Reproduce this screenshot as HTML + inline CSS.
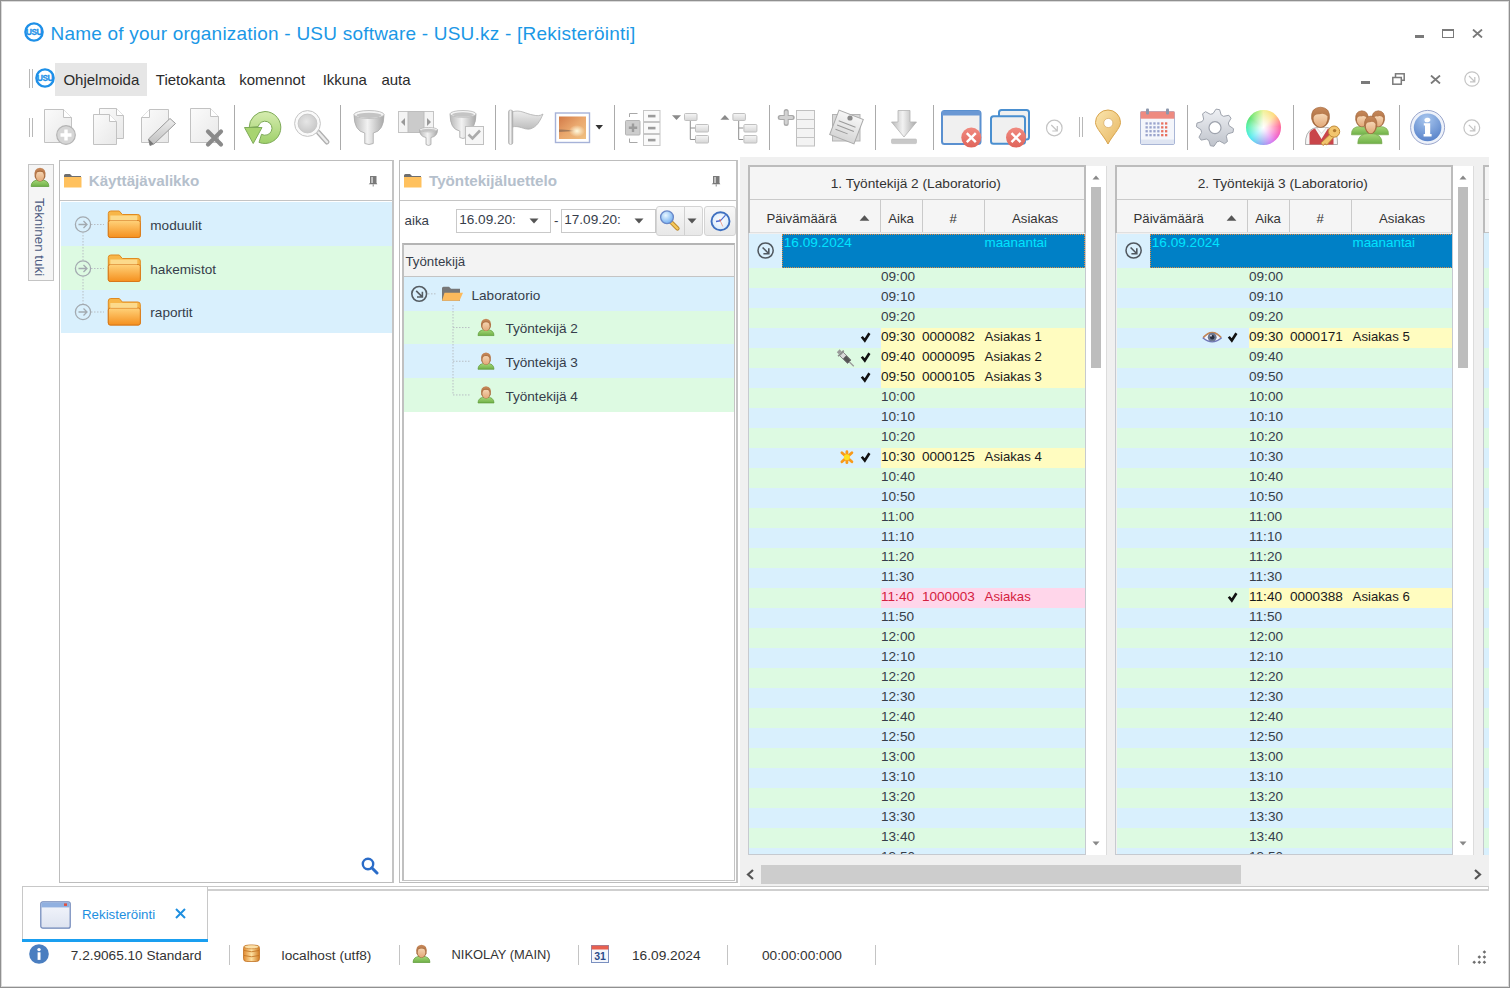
<!DOCTYPE html><html><head><meta charset="utf-8"><style>
*{margin:0;padding:0;box-sizing:border-box}
html,body{width:1510px;height:988px;overflow:hidden;background:#fff}
body{position:relative;font-family:"Liberation Sans",sans-serif}
.t{position:absolute;white-space:pre}
.r{position:absolute}
</style></head><body>
<div class="r" style="left:0px;top:0px;width:1510px;height:988px;border:1px solid #909090;box-shadow:inset 0 0 0 1px #dadada;z-index:5"></div><svg class="r" style="left:24px;top:22px" width="20" height="20" viewBox="0 0 20 20"><circle cx="10" cy="10" r="8.6" fill="none" stroke="#1e90e8" stroke-width="2.4"/><text x="10" y="12.9" font-family="Liberation Sans" font-weight="700" font-size="8.2" text-anchor="middle" fill="#1e90e8" stroke="#1e90e8" stroke-width="0.3" letter-spacing="-0.4">USU</text></svg><div class="t" style="left:50.5px;top:23.82px;font-size:19px;line-height:19px;color:#1b98e6;font-weight:400;letter-spacing:0.22px">Name of your organization - USU software - USU.kz - [Rekisteröinti]</div><div class="r" style="left:1415px;top:35px;width:9px;height:2.5px;background:#7a7a7a"></div><div class="r" style="left:1442px;top:29px;width:12px;height:9px;border:1.5px solid #7a7a7a;border-top-width:2.5px"></div><svg class="r" style="left:1472px;top:29px" width="11" height="9" viewBox="0 0 11 9"><path d="M1 0.5L10 8.5M10 0.5L1 8.5" stroke="#7a7a7a" stroke-width="1.8"/></svg><div class="r" style="left:29px;top:69px;width:1px;height:19px;background:#b8b8b8"></div><div class="r" style="left:32px;top:69px;width:1px;height:19px;background:#b8b8b8"></div><svg class="r" style="left:35px;top:68px" width="20" height="20" viewBox="0 0 20 20"><circle cx="10" cy="10" r="8.6" fill="none" stroke="#1e90e8" stroke-width="2.4"/><text x="10" y="12.9" font-family="Liberation Sans" font-weight="700" font-size="8.2" text-anchor="middle" fill="#1e90e8" stroke="#1e90e8" stroke-width="0.3" letter-spacing="-0.4">USU</text></svg><div class="r" style="left:55px;top:63px;width:92px;height:33px;background:#e6e6e6"></div><div class="t" style="left:63.4px;top:72.10px;font-size:15px;line-height:15px;color:#2b2b2b;font-weight:400;">Ohjelmoida</div><div class="t" style="left:155.8px;top:72.10px;font-size:15px;line-height:15px;color:#2b2b2b;font-weight:400;">Tietokanta</div><div class="t" style="left:239.2px;top:72.10px;font-size:15px;line-height:15px;color:#2b2b2b;font-weight:400;">komennot</div><div class="t" style="left:322.7px;top:72.10px;font-size:15px;line-height:15px;color:#2b2b2b;font-weight:400;">Ikkuna</div><div class="t" style="left:381.4px;top:72.10px;font-size:15px;line-height:15px;color:#2b2b2b;font-weight:400;">auta</div><div class="r" style="left:1361px;top:81px;width:9px;height:2.5px;background:#7a7a7a"></div><svg class="r" style="left:1392px;top:73px" width="13" height="12" viewBox="0 0 13 12"><rect x="3.5" y="0.8" width="8.7" height="6.5" fill="none" stroke="#7a7a7a" stroke-width="1.5"/><rect x="0.8" y="4.5" width="8.5" height="6.7" fill="#fff" stroke="#7a7a7a" stroke-width="1.5"/></svg><svg class="r" style="left:1430px;top:75px" width="11" height="9" viewBox="0 0 11 9"><path d="M1 0.5L10 8.5M10 0.5L1 8.5" stroke="#7a7a7a" stroke-width="1.8"/></svg><svg class="r" style="left:1464px;top:71px" width="16" height="16" viewBox="0 0 16 16"><circle cx="8" cy="8" r="7.2" fill="none" stroke="#c4c4c4" stroke-width="1.2"/><path d="M5 5L10.5 10.5M6 10.8H10.8V6" fill="none" stroke="#c4c4c4" stroke-width="1.2"/></svg><svg class="r" style="left:0;top:0" width="1510" height="160" viewBox="0 0 1510 160"><defs>
<linearGradient id="gPage" x1="0" y1="0" x2="1" y2="1"><stop offset="0" stop-color="#fbfbfb"/><stop offset="1" stop-color="#e8e8e8"/></linearGradient>
<linearGradient id="gGreen" x1="0" y1="0" x2="0" y2="1"><stop offset="0" stop-color="#d6ecb0"/><stop offset="1" stop-color="#9fd06a"/></linearGradient>
<radialGradient id="gLens" cx="0.45" cy="0.4" r="0.65"><stop offset="0" stop-color="#e6e6e6"/><stop offset="1" stop-color="#c6c6c6"/></radialGradient>
<linearGradient id="gMetal" x1="0" y1="0" x2="1" y2="0"><stop offset="0" stop-color="#b8b8b8"/><stop offset="0.45" stop-color="#f2f2f2"/><stop offset="1" stop-color="#a8a8a8"/></linearGradient>
<linearGradient id="gMetalV" x1="0" y1="0" x2="0" y2="1"><stop offset="0" stop-color="#eeeeee"/><stop offset="1" stop-color="#bdbdbd"/></linearGradient>
<linearGradient id="gSun" x1="0" y1="0" x2="1" y2="1"><stop offset="0" stop-color="#d27a48"/><stop offset="0.5" stop-color="#eaa86e"/><stop offset="1" stop-color="#f0c080"/></linearGradient>
<radialGradient id="gSunSpot" cx="0.5" cy="0.5" r="0.5"><stop offset="0" stop-color="#fffbe0"/><stop offset="1" stop-color="#fffbe0" stop-opacity="0"/></radialGradient>
<linearGradient id="gBox" x1="0" y1="0" x2="0" y2="1"><stop offset="0" stop-color="#f6f6f6"/><stop offset="1" stop-color="#d6d6d6"/></linearGradient>
<linearGradient id="gPin" x1="0" y1="0" x2="1" y2="1"><stop offset="0" stop-color="#fbe6b0"/><stop offset="1" stop-color="#e7b660"/></linearGradient>
<linearGradient id="gGear" x1="0" y1="0" x2="0" y2="1"><stop offset="0" stop-color="#eef0f4"/><stop offset="1" stop-color="#bfc3cb"/></linearGradient>
<radialGradient id="gInfo" cx="0.45" cy="0.2" r="0.85"><stop offset="0" stop-color="#a8c6ee"/><stop offset="1" stop-color="#5580c8"/></radialGradient>
<linearGradient id="gRed" x1="0" y1="0" x2="0" y2="1"><stop offset="0" stop-color="#f08a80"/><stop offset="1" stop-color="#e0645a"/></linearGradient>
<linearGradient id="gFolder" x1="0" y1="0" x2="0" y2="1"><stop offset="0" stop-color="#fde08a"/><stop offset="1" stop-color="#f59a2a"/></linearGradient>
<linearGradient id="gSkin" x1="0" y1="0" x2="0" y2="1"><stop offset="0" stop-color="#f6d6b4"/><stop offset="1" stop-color="#e2a878"/></linearGradient>
<linearGradient id="gHair" x1="0" y1="0" x2="0" y2="1"><stop offset="0" stop-color="#c8895a"/><stop offset="1" stop-color="#9a6036"/></linearGradient>
<linearGradient id="gBody" x1="0" y1="0" x2="0" y2="1"><stop offset="0" stop-color="#a8d878"/><stop offset="1" stop-color="#6fb048"/></linearGradient>
</defs><rect x="29" y="118" width="1" height="19" fill="#b8b8b8"/><rect x="32" y="118" width="1" height="19" fill="#b8b8b8"/><rect x="1079" y="117" width="1" height="20" fill="#b8b8b8"/><rect x="1082" y="117" width="1" height="20" fill="#b8b8b8"/><rect x="234" y="105" width="1" height="45" fill="#ababab"/><rect x="340" y="105" width="1" height="45" fill="#ababab"/><rect x="495" y="105" width="1" height="45" fill="#ababab"/><rect x="614" y="105" width="1" height="45" fill="#ababab"/><rect x="769" y="105" width="1" height="45" fill="#ababab"/><rect x="875" y="105" width="1" height="45" fill="#ababab"/><rect x="933" y="105" width="1" height="45" fill="#ababab"/><rect x="1187" y="105" width="1" height="45" fill="#ababab"/><rect x="1293" y="105" width="1" height="45" fill="#ababab"/><rect x="1399" y="105" width="1" height="45" fill="#ababab"/><path d="M44.5 109.5H63.5L71.5 117.5V142.5H44.5Z" fill="url(#gPage)" stroke="#c2c2c2" stroke-width="1"/><path d="M63.5 109.5V117.5H71.5" fill="#fff" stroke="#c2c2c2" stroke-width="1"/><circle cx="66" cy="135" r="9.3" fill="#d6d6d6" stroke="#b4b4b4" stroke-width="1.2"/><path d="M66 129.5V140.5M60.5 135H71.5" stroke="#fff" stroke-width="3.4"/><path d="M99.5 108.5H116.5L123.5 115.5V138.5H99.5Z" fill="url(#gPage)" stroke="#c2c2c2" stroke-width="1"/><path d="M116.5 108.5V115.5H123.5" fill="#fff" stroke="#c2c2c2" stroke-width="1"/><path d="M93.5 114.5H109.5L116.5 121.5V144.5H93.5Z" fill="url(#gPage)" stroke="#c2c2c2" stroke-width="1"/><path d="M109.5 114.5V121.5H116.5" fill="#fff" stroke="#c2c2c2" stroke-width="1"/><path d="M149.5 109.5H168.5V142.5H141.5V117.5Z" fill="url(#gPage)" stroke="#c2c2c2" stroke-width="1"/><path d="M149.5 109.5V117.5H141.5" fill="#fff" stroke="#c2c2c2" stroke-width="1"/><path d="M150 145.5L148.5 139L170 118.5L175.5 123.5L154 144Z" fill="url(#gMetalV)" stroke="#9a9a9a" stroke-width="1"/><path d="M150 145.5L148.5 139L153.5 143.8Z" fill="#777"/><path d="M190.5 108.5H210.5L218.5 116.5V142.5H190.5Z" fill="url(#gPage)" stroke="#c2c2c2" stroke-width="1"/><path d="M210.5 108.5V116.5H218.5" fill="#fff" stroke="#c2c2c2" stroke-width="1"/><path d="M208 131.5L221 144.5M221 131.5L208 144.5" stroke="#8a8a8a" stroke-width="4.2" stroke-linecap="round"/><path d="M265 111.5A16 16 0 1 1 259 142.4L261.5 134.3A7 7 0 1 0 258.2 126.5L249.2 127.5A16 16 0 0 1 265 111.5Z" fill="url(#gGreen)" stroke="#7eaa58" stroke-width="1"/><path d="M244.5 127.5H262L253.2 143.5Z" fill="#a8d470" stroke="#7eaa58" stroke-width="1" stroke-linejoin="round"/><path d="M318.5 132.5L327 142" stroke="#b0b0b0" stroke-width="5" stroke-linecap="round"/><path d="M318.5 132.5L327 142" stroke="#ececec" stroke-width="2.4" stroke-linecap="round"/><circle cx="307.5" cy="123.5" r="12.9" fill="#fafafa" stroke="#c4c4c4" stroke-width="1"/><circle cx="307.5" cy="123.5" r="9.4" fill="url(#gLens)" stroke="#c9c9c9" stroke-width="1"/><path d="M354.0 114.5Q354.0 131.0 364.75 133V143.5Q369 145.5 373.25 143.5V133Q384.0 131.0 384.0 114.5Z" fill="url(#gMetal)" stroke="#a9a9a9" stroke-width="0.8"/><ellipse cx="369" cy="114.5" rx="15.0" ry="4.0" fill="#f4f4f4" stroke="#b8b8b8" stroke-width="0.8"/><ellipse cx="369" cy="115.3" rx="12.5" ry="2.6" fill="#c4c4c4"/><rect x="398.5" y="111.5" width="35" height="21" fill="#f4f4f4" stroke="#c4c4c4"/><rect x="408" y="111.5" width="16" height="21" fill="#cbcbcb" stroke="#bdbdbd"/><path d="M405 118V126L401 122Z" fill="#9a9a9a"/><path d="M427 118V126L431 122Z" fill="#9a9a9a"/><path d="M419.5 129.7Q419.5 136.4 426.0 137.5V144.5Q428.5 146.5 431.0 144.5V137.5Q437.5 136.4 437.5 129.7Z" fill="url(#gMetal)" stroke="#a9a9a9" stroke-width="0.8"/><ellipse cx="428.5" cy="129.7" rx="9.0" ry="2.2" fill="#f4f4f4" stroke="#b8b8b8" stroke-width="0.8"/><ellipse cx="428.5" cy="130.14" rx="7.625" ry="1.4300000000000002" fill="#c4c4c4"/><path d="M450.0 113.9Q450.0 129.3 459.75 131V137.5Q463 139.5 466.25 137.5V131Q476.0 129.3 476.0 113.9Z" fill="url(#gMetal)" stroke="#a9a9a9" stroke-width="0.8"/><ellipse cx="463" cy="113.9" rx="13.0" ry="3.4" fill="#f4f4f4" stroke="#b8b8b8" stroke-width="0.8"/><ellipse cx="463" cy="114.58" rx="10.875" ry="2.21" fill="#c4c4c4"/><rect x="465.5" y="126.5" width="18" height="18" fill="#f6f6f6" stroke="#c0c0c0"/><path d="M468.5 134.5L472.5 138.5L480 130.5" fill="none" stroke="#ababab" stroke-width="2.6"/><path d="M512 112C520 109 526 114 533 115C537 116 540 116 543 114C540 121 537 127 530 129C524 130 519 125 512 127Z" fill="url(#gMetalV)" stroke="#b0b0b0" stroke-width="0.8"/><rect x="508.5" y="110" width="4.3" height="34.5" rx="2" fill="url(#gMetal)" stroke="#a8a8a8" stroke-width="0.6"/><rect x="555.5" y="113" width="34" height="29.5" fill="#fff" stroke="#a6b2d8" stroke-width="1.4"/><rect x="559" y="116.5" width="27" height="22.5" fill="url(#gSun)"/><path d="M559 129.5Q566 129 575 131L559 132Z" fill="#7a6050" opacity="0.6"/><ellipse cx="577" cy="131" rx="8" ry="6" fill="url(#gSunSpot)"/><path d="M595.5 125H603L599.2 129.5Z" fill="#333"/><path d="M637.5 113.5H629.5V117M629.5 138.5V142.5H637.5" fill="none" stroke="#a8a8a8" stroke-width="1"/><rect x="625.5" y="120.5" width="14.5" height="14.5" rx="1" fill="#cdcdcd" stroke="#b4b4b4"/><path d="M633 123.5V132M628.8 127.8H637.2" stroke="#9c9c9c" stroke-width="2.4"/><rect x="643.5" y="110.5" width="16.5" height="11" fill="#fafafa" stroke="#c6c6c6"/><rect x="648" y="114.8" width="7.5" height="2.6" fill="#9c9c9c"/><rect x="643.5" y="122.5" width="16.5" height="11" fill="#fafafa" stroke="#c6c6c6"/><rect x="648" y="126.8" width="7.5" height="2.6" fill="#9c9c9c"/><rect x="643.5" y="134.5" width="16.5" height="11" fill="#fafafa" stroke="#c6c6c6"/><rect x="648" y="138.8" width="7.5" height="2.6" fill="#9c9c9c"/><path d="M672 115.3H681L676.5 120Z" fill="#8a8a8a"/><path d="M690.3 120V139.5H695M690.3 128H695" fill="none" stroke="#8e8e8e" stroke-width="1"/><rect x="684.5" y="113.5" width="12.5" height="7" rx="1" fill="url(#gBox)" stroke="#c0c0c0"/><rect x="695.5" y="124.5" width="13" height="7.5" rx="1" fill="url(#gBox)" stroke="#c0c0c0"/><rect x="695.5" y="135.5" width="13" height="7.5" rx="1" fill="url(#gBox)" stroke="#c0c0c0"/><path d="M720.4 119.7L724.9 115L729.4 119.7Z" fill="#8a8a8a"/><path d="M738.6999999999999 120V139.5H743.4M738.6999999999999 128H743.4" fill="none" stroke="#8e8e8e" stroke-width="1"/><rect x="732.9" y="113.5" width="12.5" height="7" rx="1" fill="url(#gBox)" stroke="#c0c0c0"/><rect x="743.9" y="124.5" width="13" height="7.5" rx="1" fill="url(#gBox)" stroke="#c0c0c0"/><rect x="743.9" y="135.5" width="13" height="7.5" rx="1" fill="url(#gBox)" stroke="#c0c0c0"/><path d="M786.2 111.5V123.5M780.2 117.5H792.2" stroke="#a9a9a9" stroke-width="5" stroke-linecap="round"/><path d="M786.2 112V123M780.7 117.5H791.7" stroke="#d2d2d2" stroke-width="3" stroke-linecap="round"/><rect x="796.5" y="110.5" width="18" height="35.5" fill="#f3f3f3" stroke="#c0c0c0"/><path d="M796.5 119.5H814.5M796.5 128.5H814.5M796.5 137.5H814.5" stroke="#c4c4c4"/><rect x="832.5" y="114.5" width="27.5" height="26.5" fill="#d8d8d8" stroke="#b4b4b4"/><g transform="rotate(21 846.5 127)"><rect x="833.5" y="114" width="26" height="26" fill="url(#gBox)" stroke="#aaa"/><path d="M837 124H855M837 128.5H855M837 133H850" stroke="#9a9a9a" stroke-width="1"/></g><circle cx="850" cy="118" r="2.6" fill="#8a8a8a"/><path d="M898 110.5H910V122H916.5L904 137L891.5 122H898Z" fill="url(#gMetal)" stroke="#b4b4b4" stroke-width="0.8"/><rect x="891.5" y="139" width="25" height="4.6" rx="1" fill="#c8c8c8" stroke="#b8b8b8" stroke-width="0.6"/><rect x="942" y="111" width="38.5" height="33" rx="2.5" fill="#f0f0f0" stroke="#5a90d0" stroke-width="2"/><rect x="942" y="111" width="38.5" height="4.5" fill="#6a98d4"/><circle cx="971.3" cy="137.6" r="10" fill="url(#gRed)"/><path d="M966.8 133.1L975.8 142.1M975.8 133.1L966.8 142.1" stroke="#fff" stroke-width="2.4"/><rect x="999" y="110" width="30" height="29.5" rx="2.5" fill="#f0f0f0" stroke="#4a8fd0" stroke-width="2"/><rect x="991" y="116.3" width="34" height="27.5" rx="2.5" fill="#f0f0f0" stroke="#4a8fd0" stroke-width="2"/><circle cx="1016" cy="137.6" r="10" fill="url(#gRed)"/><path d="M1011.5 133.1L1020.5 142.1M1020.5 133.1L1011.5 142.1" stroke="#fff" stroke-width="2.4"/><circle cx="1054.3" cy="128" r="7.8" fill="none" stroke="#c4c4c4" stroke-width="1.2"/><path d="M1051.3 125L1056.8 130.5M1052.3 131H1057.3V126" fill="none" stroke="#c4c4c4" stroke-width="1.2"/><circle cx="1471.8" cy="127.8" r="7.9" fill="none" stroke="#c4c4c4" stroke-width="1.2"/><path d="M1468.8 124.8L1474.3 130.3M1469.8 130.8H1474.8V125.8" fill="none" stroke="#c4c4c4" stroke-width="1.2"/><path d="M1108 144C1104 136 1095.5 128 1095.5 122.5A12.5 12.5 0 0 1 1120.5 122.5C1120.5 128 1112 136 1108 144Z" fill="url(#gPin)" stroke="#d8a44c" stroke-width="1"/><circle cx="1108.3" cy="123" r="4.6" fill="#fff" stroke="#d8b070" stroke-width="0.8"/><rect x="1140.5" y="111.5" width="34" height="33" rx="1.5" fill="#f4f6fb" stroke="#a9b6d6"/><rect x="1140.5" y="111.5" width="34" height="7.2" fill="#ee8a80"/><rect x="1141" y="139.5" width="33" height="4.5" fill="#dfe5f2"/><rect x="1146" y="108.5" width="3" height="6" rx="1" fill="#8c97ac"/><rect x="1166" y="108.5" width="3" height="6" rx="1" fill="#8c97ac"/><rect x="1145.5" y="122.3" width="2.3" height="2.3" fill="#9aa4cc"/><rect x="1149.4" y="122.3" width="2.3" height="2.3" fill="#9aa4cc"/><rect x="1153.3" y="122.3" width="2.3" height="2.3" fill="#9aa4cc"/><rect x="1157.2" y="122.3" width="2.3" height="2.3" fill="#9aa4cc"/><rect x="1161.1" y="122.3" width="2.3" height="2.3" fill="#e8705e"/><rect x="1165.0" y="122.3" width="2.3" height="2.3" fill="#e8705e"/><rect x="1145.5" y="126.2" width="2.3" height="2.3" fill="#9aa4cc"/><rect x="1149.4" y="126.2" width="2.3" height="2.3" fill="#9aa4cc"/><rect x="1153.3" y="126.2" width="2.3" height="2.3" fill="#9aa4cc"/><rect x="1157.2" y="126.2" width="2.3" height="2.3" fill="#9aa4cc"/><rect x="1161.1" y="126.2" width="2.3" height="2.3" fill="#e8705e"/><rect x="1165.0" y="126.2" width="2.3" height="2.3" fill="#e8705e"/><rect x="1145.5" y="130.1" width="2.3" height="2.3" fill="#9aa4cc"/><rect x="1149.4" y="130.1" width="2.3" height="2.3" fill="#9aa4cc"/><rect x="1153.3" y="130.1" width="2.3" height="2.3" fill="#9aa4cc"/><rect x="1157.2" y="130.1" width="2.3" height="2.3" fill="#9aa4cc"/><rect x="1161.1" y="130.1" width="2.3" height="2.3" fill="#e8705e"/><rect x="1165.0" y="130.1" width="2.3" height="2.3" fill="#e8705e"/><rect x="1145.5" y="134.0" width="2.3" height="2.3" fill="#9aa4cc"/><rect x="1149.4" y="134.0" width="2.3" height="2.3" fill="#9aa4cc"/><rect x="1153.3" y="134.0" width="2.3" height="2.3" fill="#9aa4cc"/><rect x="1157.2" y="134.0" width="2.3" height="2.3" fill="#9aa4cc"/><rect x="1161.1" y="134.0" width="2.3" height="2.3" fill="#e8705e"/><rect x="1165.0" y="134.0" width="2.3" height="2.3" fill="#e8705e"/><path d="M1213.00 113.64L1216.02 109.13L1219.63 109.68L1221.15 114.90L1223.53 116.34L1228.86 115.29L1231.01 118.23L1228.40 123.00L1229.06 125.70L1233.57 128.72L1233.02 132.33L1227.80 133.85L1226.36 136.23L1227.41 141.56L1224.47 143.71L1219.70 141.10L1217.00 141.76L1213.98 146.27L1210.37 145.72L1208.85 140.50L1206.47 139.06L1201.14 140.11L1198.99 137.17L1201.60 132.40L1200.94 129.70L1196.43 126.68L1196.98 123.07L1202.20 121.55L1203.64 119.17L1202.59 113.84L1205.53 111.69L1210.30 114.30Z" fill="url(#gGear)" stroke="#9ea3ad" stroke-width="1" stroke-linejoin="round"/><circle cx="1215" cy="127.7" r="6" fill="#fff" stroke="#9ea3ad" stroke-width="1.2"/><circle cx="1427.6" cy="127.4" r="17" fill="#eef2fa" stroke="#9aa6cc" stroke-width="1"/><circle cx="1427.6" cy="127.4" r="13.8" fill="url(#gInfo)"/><ellipse cx="1427.4" cy="120" rx="3" ry="2.2" fill="#fff" transform="rotate(-15 1427.4 120)"/><path d="M1423.8 123.2H1430.2V134H1431.6V136.4H1423.6V134H1425V125.6H1423.8Z" fill="#fff"/><path d="M1305.5 144.5Q1305 132 1313 128.5L1317 127.5H1327L1331 128.5Q1338 132 1337.5 144.5Z" fill="#f6f6f6" stroke="#9a9a9a" stroke-width="0.8"/><path d="M1309.5 144.5V133Q1311 129.5 1315 128.5L1321.5 139L1328 128.5Q1332 129.5 1333.5 133V144.5Z" fill="#c9454a"/><path d="M1316.5 127.5L1321.5 133.5L1326.5 127.5Z" fill="#fff" stroke="#bbb" stroke-width="0.5"/><path d="M1311.59 118.64Q1310.51 107.72 1320.5 107.19999999999999Q1330.49 107.72 1329.41 118.64Q1327.25 127.47999999999999 1320.5 127.47999999999999Q1313.75 127.47999999999999 1311.59 118.64Z" fill="url(#gHair)" stroke="#a0643a" stroke-width="0.6"/><path d="M1313.48 118.11999999999999Q1314.02 113.96 1319.15 114.27199999999999Q1324.55 112.39999999999999 1327.52 116.35199999999999Q1327.79 120.72 1325.9 123.83999999999999Q1323.875 126.96 1320.5 126.96Q1317.125 126.96 1315.1 123.83999999999999Q1313.21 120.72 1313.48 118.11999999999999Z" fill="url(#gSkin)"/><path d="M1330.5 134L1321 143L1323 145.5L1325 143.8L1327 145L1328.5 143L1333.5 137.5" fill="#f2c56e" stroke="#c08a38" stroke-width="0.9" stroke-linejoin="round"/><circle cx="1334.1" cy="131.6" r="5.6" fill="#f2c56e" stroke="#c08a38" stroke-width="1"/><circle cx="1334.6" cy="130.6" r="1.7" fill="#b07a30"/><path d="M1351.5 134.8Q1351.0 126.5 1360.25 126.5Q1369.5 126.5 1369 134.8Z" fill="url(#gBody)" stroke="#78a850" stroke-width="0.7"/><path d="M1371 134.8Q1370.5 126.5 1379.75 126.5Q1389.0 126.5 1388.5 134.8Z" fill="url(#gBody)" stroke="#78a850" stroke-width="0.7"/><path d="M1355.63 119.82Q1354.8700000000001 111.21000000000001 1361.9 110.8Q1368.93 111.21000000000001 1368.17 119.82Q1366.65 126.78999999999999 1361.9 126.78999999999999Q1357.15 126.78999999999999 1355.63 119.82Z" fill="url(#gHair)" stroke="#a0643a" stroke-width="0.6"/><path d="M1356.96 119.41Q1357.3400000000001 116.13 1360.95 116.376Q1364.75 114.9 1366.8400000000001 118.016Q1367.0300000000002 121.46 1365.7 123.92Q1364.275 126.38 1361.9 126.38Q1359.525 126.38 1358.1000000000001 123.92Q1356.77 121.46 1356.96 119.41Z" fill="url(#gSkin)"/><path d="M1372.03 119.82Q1371.27 111.21000000000001 1378.3 110.8Q1385.33 111.21000000000001 1384.57 119.82Q1383.05 126.78999999999999 1378.3 126.78999999999999Q1373.55 126.78999999999999 1372.03 119.82Z" fill="url(#gHair)" stroke="#a0643a" stroke-width="0.6"/><path d="M1373.36 119.41Q1373.74 116.13 1377.35 116.376Q1381.1499999999999 114.9 1383.24 118.016Q1383.43 121.46 1382.1 123.92Q1380.675 126.38 1378.3 126.38Q1375.925 126.38 1374.5 123.92Q1373.1699999999998 121.46 1373.36 119.41Z" fill="url(#gSkin)"/><path d="M1357.8 143.7Q1357.3 133.5 1369.9 133.5Q1382.5 133.5 1382 143.7Z" fill="url(#gBody)" stroke="#78a850" stroke-width="0.7"/><path d="M1364.5620000000001 126.0Q1363.818 116.55 1370.7 116.1Q1377.582 116.55 1376.838 126.0Q1375.3500000000001 133.65 1370.7 133.65Q1366.05 133.65 1364.5620000000001 126.0Z" fill="url(#gHair)" stroke="#a0643a" stroke-width="0.6"/><path d="M1365.864 125.55Q1366.236 121.94999999999999 1369.77 122.22Q1373.49 120.6 1375.536 124.02Q1375.722 127.8 1374.42 130.5Q1373.025 133.2 1370.7 133.2Q1368.375 133.2 1366.98 130.5Q1365.678 127.8 1365.864 125.55Z" fill="url(#gSkin)"/></svg><div class="r" style="left:1246px;top:110px;width:35px;height:35px;border-radius:50%;background:conic-gradient(from 0deg,#f0f090,#ffd870 40deg,#ff5c90 85deg,#f050c8 125deg,#d070f0 150deg,#80a8f0 190deg,#40e8f0 230deg,#40f0a8 270deg,#50e060 305deg,#b8f080 345deg,#f0f090)"></div><div class="r" style="left:1246px;top:110px;width:35px;height:35px;border-radius:50%;background:radial-gradient(circle at 50% 50%,#fff 0,rgba(255,255,255,.8) 18%,rgba(255,255,255,0) 75%)"></div><div class="r" style="left:28px;top:164px;width:26px;height:117px;background:#f5f5f5;border:1px solid #c4c4c4"></div><svg class="r" style="left:30px;top:167px" width="20" height="20" viewBox="0 0 18 18"><defs><linearGradient id="gFolder2" x1="0" y1="0" x2="0" y2="1"><stop offset="0" stop-color="#ffd27a"/><stop offset="1" stop-color="#f5901e"/></linearGradient></defs><g transform="translate(0,0)"><path d="M1 17.5Q1 11.5 9 11.5Q17 11.5 17 17.5Z" fill="url(#gBody)" stroke="#5c9a36" stroke-width="0.7"/><path d="M4.2 9Q3 1 9 0.7Q15 1 13.8 9Q12 13 9 13Q6 13 4.2 9Z" fill="url(#gHair)"/><ellipse cx="9" cy="8.2" rx="3.6" ry="4.6" fill="url(#gSkin)"/><path d="M5 5Q9 1.5 13 5Q9 3.6 5 5Z" fill="#a86a3c"/></g></svg><div class="t" style="left:30px;top:197.5px;width:20px;height:82px;"><div style="position:absolute;left:16.5px;top:0;transform-origin:0 0;transform:rotate(90deg);font-size:13.4px;line-height:16px;color:#4a5880;white-space:nowrap">Tekninen tuki</div></div><div class="r" style="left:59px;top:160px;width:335px;height:723px;border:1px solid #bdbdbd;border-right:2px solid #c4c4c4;background:#fff"></div><div class="r" style="left:60px;top:200px;width:333px;height:1px;background:#c4c4c4"></div><svg class="r" style="left:64px;top:174px" width="18" height="14" viewBox="0 0 18 14"><path d="M0 1.5Q0 0 1.5 0H6L8 2H17V4H0Z" fill="#6e6e6e"/><rect x="0" y="3" width="17.5" height="10.5" fill="#ffc15e"/></svg><div class="t" style="left:88.7px;top:173.13px;font-size:15.2px;line-height:15.2px;color:#b5c0cc;font-weight:700;">Käyttäjävalikko</div><svg class="r" style="left:368px;top:175px" width="10" height="12" viewBox="0 0 10 12"><rect x="2" y="1" width="6.5" height="7.2" fill="#7a7a7a"/><rect x="3.4" y="2" width="1.3" height="6" fill="#e6e6e6"/><path d="M0.7 9.3L2 8H8.5L9.4 9.3Z" fill="#777"/><rect x="4.7" y="9.3" width="1" height="2.2" fill="#888"/></svg><div class="r" style="left:61px;top:202px;width:331px;height:44px;background:#d9f0fd"></div><div class="r" style="left:61px;top:246px;width:331px;height:44px;background:#ddfae2"></div><div class="r" style="left:61px;top:290px;width:331px;height:43px;background:#d9f0fd"></div><svg class="r" style="left:0;top:0" width="400" height="340" viewBox="0 0 400 340"><defs><linearGradient id="gFolder2" x1="0" y1="0" x2="0" y2="1"><stop offset="0" stop-color="#ffd27a"/><stop offset="1" stop-color="#f5901e"/></linearGradient></defs><circle cx="83" cy="224.5" r="7.6" fill="none" stroke="#a3aab0" stroke-width="1.3"/><path d="M78.5 224.5H87M83.5 221.0L87 224.5L83.5 228.0" fill="none" stroke="#a3aab0" stroke-width="1.3"/><path d="M91 224.5H104" stroke="#b8bec4" stroke-width="1" stroke-dasharray="1.5 1.5"/><g transform="translate(107.3,210.5)"><path d="M1 3Q1 0.5 3.5 0.5H12L15 4H30.5Q33 4 33 6.5V25Q33 27 31 27H3Q1 27 1 25Z" fill="#f7b648" stroke="#e08a20" stroke-width="1"/><path d="M1 12Q1 10 3 10H31Q33 10 33 12V25Q33 27 31 27H3Q1 27 1 25Z" fill="url(#gFolder2)" stroke="#d8781a" stroke-width="1"/><path d="M3 5H30V10H3Z" fill="#fde9a8" opacity="0.7"/></g><circle cx="83" cy="268.5" r="7.6" fill="none" stroke="#a3aab0" stroke-width="1.3"/><path d="M78.5 268.5H87M83.5 265.0L87 268.5L83.5 272.0" fill="none" stroke="#a3aab0" stroke-width="1.3"/><path d="M91 268.5H104" stroke="#b8bec4" stroke-width="1" stroke-dasharray="1.5 1.5"/><g transform="translate(107.3,254.5)"><path d="M1 3Q1 0.5 3.5 0.5H12L15 4H30.5Q33 4 33 6.5V25Q33 27 31 27H3Q1 27 1 25Z" fill="#f7b648" stroke="#e08a20" stroke-width="1"/><path d="M1 12Q1 10 3 10H31Q33 10 33 12V25Q33 27 31 27H3Q1 27 1 25Z" fill="url(#gFolder2)" stroke="#d8781a" stroke-width="1"/><path d="M3 5H30V10H3Z" fill="#fde9a8" opacity="0.7"/></g><circle cx="83" cy="312.0" r="7.6" fill="none" stroke="#a3aab0" stroke-width="1.3"/><path d="M78.5 312.0H87M83.5 308.5L87 312.0L83.5 315.5" fill="none" stroke="#a3aab0" stroke-width="1.3"/><path d="M91 312.0H104" stroke="#b8bec4" stroke-width="1" stroke-dasharray="1.5 1.5"/><g transform="translate(107.3,298.0)"><path d="M1 3Q1 0.5 3.5 0.5H12L15 4H30.5Q33 4 33 6.5V25Q33 27 31 27H3Q1 27 1 25Z" fill="#f7b648" stroke="#e08a20" stroke-width="1"/><path d="M1 12Q1 10 3 10H31Q33 10 33 12V25Q33 27 31 27H3Q1 27 1 25Z" fill="url(#gFolder2)" stroke="#d8781a" stroke-width="1"/><path d="M3 5H30V10H3Z" fill="#fde9a8" opacity="0.7"/></g><path d="M83 232V260M83 276V304" stroke="#b8bec4" stroke-width="1" stroke-dasharray="1.5 1.5"/></svg><div class="t" style="left:150.3px;top:218.79px;font-size:13.6px;line-height:13.6px;color:#363d4a;font-weight:400;">moduulit</div><div class="t" style="left:150.3px;top:262.79px;font-size:13.6px;line-height:13.6px;color:#363d4a;font-weight:400;">hakemistot</div><div class="t" style="left:150.3px;top:306.29px;font-size:13.6px;line-height:13.6px;color:#363d4a;font-weight:400;">raportit</div><svg class="r" style="left:361px;top:857px" width="18" height="18" viewBox="0 0 18 18"><circle cx="7" cy="7" r="5.2" fill="none" stroke="#2a6cc8" stroke-width="2.4"/><path d="M10.8 10.8L16 16" stroke="#2a6cc8" stroke-width="3" stroke-linecap="round"/></svg><div class="r" style="left:399px;top:160px;width:339px;height:723px;border:1px solid #bdbdbd;border-right:2px solid #c4c4c4;background:#fff"></div><div class="r" style="left:400px;top:200px;width:337px;height:1px;background:#c4c4c4"></div><svg class="r" style="left:404px;top:174px" width="18" height="14" viewBox="0 0 18 14"><path d="M0 1.5Q0 0 1.5 0H6L8 2H17V4H0Z" fill="#6e6e6e"/><rect x="0" y="3" width="17.5" height="10.5" fill="#ffc15e"/></svg><div class="t" style="left:429px;top:173.13px;font-size:15.2px;line-height:15.2px;color:#b5c0cc;font-weight:700;">Työntekijäluettelo</div><svg class="r" style="left:711px;top:175px" width="10" height="12" viewBox="0 0 10 12"><rect x="2" y="1" width="6.5" height="7.2" fill="#7a7a7a"/><rect x="3.4" y="2" width="1.3" height="6" fill="#e6e6e6"/><path d="M0.7 9.3L2 8H8.5L9.4 9.3Z" fill="#777"/><rect x="4.7" y="9.3" width="1" height="2.2" fill="#888"/></svg><div class="t" style="left:404.6px;top:213.54px;font-size:13.3px;line-height:13.3px;color:#363d4a;font-weight:400;">aika</div><div class="r" style="left:456px;top:209px;width:95px;height:24px;border:1px solid #c9c9c9;background:#fff"></div><div class="t" style="left:459.2px;top:213.49px;font-size:13.6px;line-height:13.6px;color:#363d4a;font-weight:400;">16.09.20:</div><svg class="r" style="left:529px;top:218px" width="10" height="6" viewBox="0 0 10 6"><path d="M0.5 0.5H9.5L5 5.5Z" fill="#555"/></svg><div class="t" style="left:554px;top:213.54px;font-size:13.3px;line-height:13.3px;color:#363d4a;font-weight:400;">-</div><div class="r" style="left:561px;top:209px;width:95px;height:24px;border:1px solid #c9c9c9;background:#fff"></div><div class="t" style="left:564.2px;top:213.49px;font-size:13.6px;line-height:13.6px;color:#363d4a;font-weight:400;">17.09.20:</div><svg class="r" style="left:634px;top:218px" width="10" height="6" viewBox="0 0 10 6"><path d="M0.5 0.5H9.5L5 5.5Z" fill="#555"/></svg><div class="r" style="left:656px;top:206px;width:47px;height:30px;border:1px solid #d4d4d4;border-radius:3px;background:linear-gradient(#f8f8f8,#e8e8e8)"></div><div class="r" style="left:684px;top:207px;width:1px;height:28px;background:#d0d0d0"></div><svg class="r" style="left:687px;top:218px" width="10" height="6" viewBox="0 0 10 6"><path d="M0.5 0.5H9.5L5 5.5Z" fill="#555"/></svg><svg class="r" style="left:657px;top:208px" width="26" height="26" viewBox="0 0 26 26"><defs><radialGradient id="gMag" cx="0.4" cy="0.35" r="0.7"><stop offset="0" stop-color="#e8f6ff"/><stop offset="1" stop-color="#6aaaf0"/></radialGradient></defs><path d="M13.8 13.8L20.5 20.5" stroke="#b8862c" stroke-width="4.2" stroke-linecap="round"/><path d="M13.8 13.8L20.5 20.5" stroke="#f6c85a" stroke-width="2.4" stroke-linecap="round"/><circle cx="10" cy="9.3" r="6.4" fill="url(#gMag)" stroke="#6a88c8" stroke-width="1.3"/></svg><div class="r" style="left:704px;top:206px;width:32px;height:30px;border:1px solid #d4d4d4;border-radius:3px;background:linear-gradient(#f8f8f8,#e8e8e8)"></div><svg class="r" style="left:709px;top:210px" width="22" height="22" viewBox="0 0 22 22"><defs><radialGradient id="gClk" cx="0.5" cy="0.45" r="0.6"><stop offset="0" stop-color="#ffffff"/><stop offset="1" stop-color="#d6e8fa"/></radialGradient></defs><circle cx="11.5" cy="11.2" r="9" fill="url(#gClk)" stroke="#3f70c0" stroke-width="1.9"/><path d="M11.3 10.8L16.5 5.2" stroke="#4a6ad0" stroke-width="1.1"/><path d="M11.3 10.8L13.8 16.5" stroke="#f0a898" stroke-width="1"/><path d="M11.3 10.8L7 11.5" stroke="#4a6ad0" stroke-width="1.4"/><path d="M10.8 9L11.5 11" stroke="#e06050" stroke-width="1"/></svg><div class="r" style="left:402px;top:243px;width:333px;height:638px;border:1px solid #c4c4c4;border-top:2px solid #b4b4b4;border-left:2px solid #c0c0c0"></div><div class="r" style="left:404px;top:245px;width:330px;height:31px;background:#f3f3f3"></div><div class="r" style="left:404px;top:276px;width:330px;height:1px;background:#c4c4c4"></div><div class="t" style="left:405.4px;top:254.74px;font-size:13.3px;line-height:13.3px;color:#363d4a;font-weight:400;">Työntekijä</div><div class="r" style="left:404px;top:277.0px;width:330px;height:33.9px;background:#d9f0fd"></div><div class="t" style="left:471.5px;top:288.64px;font-size:13.6px;line-height:13.6px;color:#363d4a;font-weight:400;">Laboratorio</div><div class="r" style="left:404px;top:310.7px;width:330px;height:33.9px;background:#ddfae2"></div><div class="t" style="left:505.4px;top:322.34px;font-size:13.6px;line-height:13.6px;color:#363d4a;font-weight:400;">Työntekijä 2</div><div class="r" style="left:404px;top:344.4px;width:330px;height:33.9px;background:#d9f0fd"></div><div class="t" style="left:505.4px;top:356.04px;font-size:13.6px;line-height:13.6px;color:#363d4a;font-weight:400;">Työntekijä 3</div><div class="r" style="left:404px;top:378.1px;width:330px;height:33.9px;background:#ddfae2"></div><div class="t" style="left:505.4px;top:389.74px;font-size:13.6px;line-height:13.6px;color:#363d4a;font-weight:400;">Työntekijä 4</div><svg class="r" style="left:0;top:0" width="740" height="420" viewBox="0 0 740 420"><defs><linearGradient id="gFolder2" x1="0" y1="0" x2="0" y2="1"><stop offset="0" stop-color="#ffd27a"/><stop offset="1" stop-color="#f5901e"/></linearGradient></defs><circle cx="419.2" cy="293.85" r="7.4" fill="none" stroke="#555c62" stroke-width="1.6"/><path d="M416.2 290.85L422.0 296.65000000000003M417.0 297.05H422.4V291.65000000000003" fill="none" stroke="#555c62" stroke-width="1.6"/><path d="M428 293.85H436" stroke="#b8bec4" stroke-width="1" stroke-dasharray="1.5 1.5"/><g transform="translate(442,286.85)"><path d="M0 1.5Q0 0 1.5 0H7L9 2H18V14H0Z" fill="#777"/><path d="M2.5 6H21L17.5 14H0Z" fill="#fcba5c"/></g><path d="M453 327.55H470" stroke="#b8bec4" stroke-width="1" stroke-dasharray="1.5 1.5"/><g transform="translate(477,318.05)"><path d="M1 17.5Q1 11.5 9 11.5Q17 11.5 17 17.5Z" fill="url(#gBody)" stroke="#5c9a36" stroke-width="0.7"/><path d="M4.2 9Q3 1 9 0.7Q15 1 13.8 9Q12 13 9 13Q6 13 4.2 9Z" fill="url(#gHair)"/><ellipse cx="9" cy="8.2" rx="3.6" ry="4.6" fill="url(#gSkin)"/><path d="M5 5Q9 1.5 13 5Q9 3.6 5 5Z" fill="#a86a3c"/></g><path d="M453 361.25H470" stroke="#b8bec4" stroke-width="1" stroke-dasharray="1.5 1.5"/><g transform="translate(477,351.75)"><path d="M1 17.5Q1 11.5 9 11.5Q17 11.5 17 17.5Z" fill="url(#gBody)" stroke="#5c9a36" stroke-width="0.7"/><path d="M4.2 9Q3 1 9 0.7Q15 1 13.8 9Q12 13 9 13Q6 13 4.2 9Z" fill="url(#gHair)"/><ellipse cx="9" cy="8.2" rx="3.6" ry="4.6" fill="url(#gSkin)"/><path d="M5 5Q9 1.5 13 5Q9 3.6 5 5Z" fill="#a86a3c"/></g><path d="M453 394.95000000000005H470" stroke="#b8bec4" stroke-width="1" stroke-dasharray="1.5 1.5"/><g transform="translate(477,385.45000000000005)"><path d="M1 17.5Q1 11.5 9 11.5Q17 11.5 17 17.5Z" fill="url(#gBody)" stroke="#5c9a36" stroke-width="0.7"/><path d="M4.2 9Q3 1 9 0.7Q15 1 13.8 9Q12 13 9 13Q6 13 4.2 9Z" fill="url(#gHair)"/><ellipse cx="9" cy="8.2" rx="3.6" ry="4.6" fill="url(#gSkin)"/><path d="M5 5Q9 1.5 13 5Q9 3.6 5 5Z" fill="#a86a3c"/></g><path d="M453 305V394.95000000000005" stroke="#b8bec4" stroke-width="1" stroke-dasharray="1.5 1.5"/></svg><div class="r" style="left:740px;top:157px;width:749px;height:729px;background:#f0f0f0"></div><div class="r" style="left:749px;top:233px;width:336px;height:621px;overflow:hidden"><div class="r" style="left:0px;top:0;width:336px;height:621px"><div class="r" style="left:0;top:0.5px;width:336px;height:34px;background:#d9f0fd"></div><div class="r" style="left:33px;top:0.5px;width:303px;height:34px;background:#0080c6;border:1px dotted #e08a40"></div><div class="t" style="left:34.8px;top:3.4px;font-size:13.6px;line-height:13.6px;color:#00e4ff">16.09.2024</div><div class="t" style="left:235.5px;top:3.4px;font-size:13.4px;line-height:13.6px;color:#00e4ff">maanantai</div><svg class="r" style="left:0;top:0" width="40" height="34" viewBox="0 0 40 34"><circle cx="16.6" cy="17.5" r="7.6" fill="none" stroke="#50575e" stroke-width="1.5"/><path d="M13.600000000000001 14.5L19.400000000000002 20.3M14.400000000000002 20.7H19.8V15.3" fill="none" stroke="#50575e" stroke-width="1.6"/></svg><div class="r" style="left:0;top:34.5px;width:336px;height:20px;background:#ddfae2"></div><div class="t" style="left:132px;top:36.6px;font-size:13.6px;line-height:13.6px;color:#363d4a">09:00</div><div class="r" style="left:0;top:54.5px;width:336px;height:20px;background:#d9f0fd"></div><div class="t" style="left:132px;top:56.6px;font-size:13.6px;line-height:13.6px;color:#363d4a">09:10</div><div class="r" style="left:0;top:74.5px;width:336px;height:20px;background:#ddfae2"></div><div class="t" style="left:132px;top:76.6px;font-size:13.6px;line-height:13.6px;color:#363d4a">09:20</div><div class="r" style="left:0;top:94.5px;width:336px;height:20px;background:#d9f0fd"></div><div class="r" style="left:131.5px;top:94.5px;width:204.5px;height:20px;background:#fffcc0"></div><div class="t" style="left:172.9px;top:96.6px;font-size:13.6px;line-height:13.6px;color:#1a1a1a">0000082</div><div class="t" style="left:235.6px;top:96.6px;font-size:13.2px;line-height:13.6px;color:#1a1a1a">Asiakas 1</div><div class="t" style="left:132px;top:96.6px;font-size:13.6px;line-height:13.6px;color:#1a1a1a">09:30</div><div class="r" style="left:0;top:114.5px;width:336px;height:20px;background:#ddfae2"></div><div class="r" style="left:131.5px;top:114.5px;width:204.5px;height:20px;background:#fffcc0"></div><div class="t" style="left:172.9px;top:116.6px;font-size:13.6px;line-height:13.6px;color:#1a1a1a">0000095</div><div class="t" style="left:235.6px;top:116.6px;font-size:13.2px;line-height:13.6px;color:#1a1a1a">Asiakas 2</div><div class="t" style="left:132px;top:116.6px;font-size:13.6px;line-height:13.6px;color:#1a1a1a">09:40</div><div class="r" style="left:0;top:134.5px;width:336px;height:20px;background:#d9f0fd"></div><div class="r" style="left:131.5px;top:134.5px;width:204.5px;height:20px;background:#fffcc0"></div><div class="t" style="left:172.9px;top:136.6px;font-size:13.6px;line-height:13.6px;color:#1a1a1a">0000105</div><div class="t" style="left:235.6px;top:136.6px;font-size:13.2px;line-height:13.6px;color:#1a1a1a">Asiakas 3</div><div class="t" style="left:132px;top:136.6px;font-size:13.6px;line-height:13.6px;color:#1a1a1a">09:50</div><div class="r" style="left:0;top:154.5px;width:336px;height:20px;background:#ddfae2"></div><div class="t" style="left:132px;top:156.6px;font-size:13.6px;line-height:13.6px;color:#363d4a">10:00</div><div class="r" style="left:0;top:174.5px;width:336px;height:20px;background:#d9f0fd"></div><div class="t" style="left:132px;top:176.6px;font-size:13.6px;line-height:13.6px;color:#363d4a">10:10</div><div class="r" style="left:0;top:194.5px;width:336px;height:20px;background:#ddfae2"></div><div class="t" style="left:132px;top:196.6px;font-size:13.6px;line-height:13.6px;color:#363d4a">10:20</div><div class="r" style="left:0;top:214.5px;width:336px;height:20px;background:#d9f0fd"></div><div class="r" style="left:131.5px;top:214.5px;width:204.5px;height:20px;background:#fffcc0"></div><div class="t" style="left:172.9px;top:216.6px;font-size:13.6px;line-height:13.6px;color:#1a1a1a">0000125</div><div class="t" style="left:235.6px;top:216.6px;font-size:13.2px;line-height:13.6px;color:#1a1a1a">Asiakas 4</div><div class="t" style="left:132px;top:216.6px;font-size:13.6px;line-height:13.6px;color:#1a1a1a">10:30</div><div class="r" style="left:0;top:234.5px;width:336px;height:20px;background:#ddfae2"></div><div class="t" style="left:132px;top:236.6px;font-size:13.6px;line-height:13.6px;color:#363d4a">10:40</div><div class="r" style="left:0;top:254.5px;width:336px;height:20px;background:#d9f0fd"></div><div class="t" style="left:132px;top:256.6px;font-size:13.6px;line-height:13.6px;color:#363d4a">10:50</div><div class="r" style="left:0;top:274.5px;width:336px;height:20px;background:#ddfae2"></div><div class="t" style="left:132px;top:276.6px;font-size:13.6px;line-height:13.6px;color:#363d4a">11:00</div><div class="r" style="left:0;top:294.5px;width:336px;height:20px;background:#d9f0fd"></div><div class="t" style="left:132px;top:296.6px;font-size:13.6px;line-height:13.6px;color:#363d4a">11:10</div><div class="r" style="left:0;top:314.5px;width:336px;height:20px;background:#ddfae2"></div><div class="t" style="left:132px;top:316.6px;font-size:13.6px;line-height:13.6px;color:#363d4a">11:20</div><div class="r" style="left:0;top:334.5px;width:336px;height:20px;background:#d9f0fd"></div><div class="t" style="left:132px;top:336.6px;font-size:13.6px;line-height:13.6px;color:#363d4a">11:30</div><div class="r" style="left:0;top:354.5px;width:336px;height:20px;background:#ddfae2"></div><div class="r" style="left:131.5px;top:354.5px;width:204.5px;height:20px;background:#ffd6ea"></div><div class="t" style="left:172.9px;top:356.6px;font-size:13.6px;line-height:13.6px;color:#d42040">1000003</div><div class="t" style="left:235.6px;top:356.6px;font-size:13.2px;line-height:13.6px;color:#d42040">Asiakas</div><div class="t" style="left:132px;top:356.6px;font-size:13.6px;line-height:13.6px;color:#d42040">11:40</div><div class="r" style="left:0;top:374.5px;width:336px;height:20px;background:#d9f0fd"></div><div class="t" style="left:132px;top:376.6px;font-size:13.6px;line-height:13.6px;color:#363d4a">11:50</div><div class="r" style="left:0;top:394.5px;width:336px;height:20px;background:#ddfae2"></div><div class="t" style="left:132px;top:396.6px;font-size:13.6px;line-height:13.6px;color:#363d4a">12:00</div><div class="r" style="left:0;top:414.5px;width:336px;height:20px;background:#d9f0fd"></div><div class="t" style="left:132px;top:416.6px;font-size:13.6px;line-height:13.6px;color:#363d4a">12:10</div><div class="r" style="left:0;top:434.5px;width:336px;height:20px;background:#ddfae2"></div><div class="t" style="left:132px;top:436.6px;font-size:13.6px;line-height:13.6px;color:#363d4a">12:20</div><div class="r" style="left:0;top:454.5px;width:336px;height:20px;background:#d9f0fd"></div><div class="t" style="left:132px;top:456.6px;font-size:13.6px;line-height:13.6px;color:#363d4a">12:30</div><div class="r" style="left:0;top:474.5px;width:336px;height:20px;background:#ddfae2"></div><div class="t" style="left:132px;top:476.6px;font-size:13.6px;line-height:13.6px;color:#363d4a">12:40</div><div class="r" style="left:0;top:494.5px;width:336px;height:20px;background:#d9f0fd"></div><div class="t" style="left:132px;top:496.6px;font-size:13.6px;line-height:13.6px;color:#363d4a">12:50</div><div class="r" style="left:0;top:514.5px;width:336px;height:20px;background:#ddfae2"></div><div class="t" style="left:132px;top:516.6px;font-size:13.6px;line-height:13.6px;color:#363d4a">13:00</div><div class="r" style="left:0;top:534.5px;width:336px;height:20px;background:#d9f0fd"></div><div class="t" style="left:132px;top:536.6px;font-size:13.6px;line-height:13.6px;color:#363d4a">13:10</div><div class="r" style="left:0;top:554.5px;width:336px;height:20px;background:#ddfae2"></div><div class="t" style="left:132px;top:556.6px;font-size:13.6px;line-height:13.6px;color:#363d4a">13:20</div><div class="r" style="left:0;top:574.5px;width:336px;height:20px;background:#d9f0fd"></div><div class="t" style="left:132px;top:576.6px;font-size:13.6px;line-height:13.6px;color:#363d4a">13:30</div><div class="r" style="left:0;top:594.5px;width:336px;height:20px;background:#ddfae2"></div><div class="t" style="left:132px;top:596.6px;font-size:13.6px;line-height:13.6px;color:#363d4a">13:40</div><div class="r" style="left:0;top:614.5px;width:336px;height:20px;background:#d9f0fd"></div><div class="t" style="left:132px;top:616.6px;font-size:13.6px;line-height:13.6px;color:#363d4a">13:50</div></div></div><svg class="r" style="left:0;top:0" width="1510" height="870" viewBox="0 0 1510 870"><path d="M861.8 336.7L864.8 340.5L869.4 333.3" fill="none" stroke="#111" stroke-width="2.6" stroke-linejoin="miter"/><g transform="translate(836,348.5) rotate(-45 10 10)"><rect x="8" y="-1" width="4" height="3" fill="#9a9a9a"/><rect x="6" y="2" width="8" height="1.6" fill="#8a8a8a"/><rect x="7.5" y="3.6" width="5" height="11" fill="#d8d8d8" stroke="#777" stroke-width="0.8"/><rect x="7.8" y="8" width="4.4" height="6.5" fill="#555"/><path d="M10 14.6V21" stroke="#999" stroke-width="1.2"/></g><path d="M861.8 356.7L864.8 360.5L869.4 353.3" fill="none" stroke="#111" stroke-width="2.6" stroke-linejoin="miter"/><path d="M861.8 376.7L864.8 380.5L869.4 373.3" fill="none" stroke="#111" stroke-width="2.6" stroke-linejoin="miter"/><path d="M841.9 452.7L851.9 461.7M851.9 452.7L841.9 461.7M846.9 451.7V462.7" stroke="#f89a1a" stroke-width="2.8" stroke-linecap="round"/><circle cx="846.9" cy="457.2" r="3" fill="#ffe020"/><path d="M861.8 456.7L864.8 460.5L869.4 453.3" fill="none" stroke="#111" stroke-width="2.6" stroke-linejoin="miter"/></svg><div class="r" style="left:748px;top:165px;width:338px;height:690px;border:1px solid #c6cad0"></div><div class="r" style="left:748px;top:165px;width:338px;height:68px;border:2px solid #bcbcbc;border-bottom:none;background:#f5f5f5"></div><div class="r" style="left:750px;top:199px;width:334px;height:1px;background:#cacaca"></div><div class="r" style="left:750px;top:232px;width:334px;height:1px;background:#e0e0e0"></div><div class="r" style="left:880px;top:200px;width:1px;height:32px;background:#cacaca"></div><div class="r" style="left:922px;top:200px;width:1px;height:32px;background:#cacaca"></div><div class="r" style="left:984px;top:200px;width:1px;height:32px;background:#cacaca"></div><div class="t" style="left:830.7px;top:177.40px;font-size:13.7px;line-height:13.7px;color:#333;font-weight:400;">1. Työntekijä 2 (Laboratorio)</div><div class="t" style="left:766.5px;top:211.83px;font-size:13.2px;line-height:13.2px;color:#333;font-weight:400;">Päivämäärä</div><svg class="r" style="left:859px;top:214px" width="11" height="8" viewBox="0 0 11 8"><path d="M0.6 6.8H10.4L5.5 1.2Z" fill="#555"/></svg><div class="t" style="left:888.3px;top:211.83px;font-size:13.2px;line-height:13.2px;color:#333;font-weight:400;">Aika</div><div class="t" style="left:949.6px;top:211.83px;font-size:13.2px;line-height:13.2px;color:#333;font-weight:400;">#</div><div class="t" style="left:1012px;top:211.83px;font-size:13.2px;line-height:13.2px;color:#333;font-weight:400;">Asiakas</div><div class="r" style="left:1086px;top:166px;width:21px;height:689px;background:#fff;border-right:1px solid #dcdcdc"></div><div class="r" style="left:1091px;top:187px;width:10px;height:181px;background:#bdbdbd"></div><svg class="r" style="left:1092px;top:175px" width="8" height="5" viewBox="0 0 8 5"><path d="M0.5 4.5H7.5L4 0.5Z" fill="#888"/></svg><svg class="r" style="left:1092px;top:841px" width="8" height="5" viewBox="0 0 8 5"><path d="M0.5 0.5H7.5L4 4.5Z" fill="#888"/></svg><div class="r" style="left:1116px;top:233px;width:336px;height:621px;overflow:hidden"><div class="r" style="left:1px;top:0;width:336px;height:621px"><div class="r" style="left:0;top:0.5px;width:336px;height:34px;background:#d9f0fd"></div><div class="r" style="left:33px;top:0.5px;width:303px;height:34px;background:#0080c6;border:1px dotted #e08a40"></div><div class="t" style="left:34.8px;top:3.4px;font-size:13.6px;line-height:13.6px;color:#00e4ff">16.09.2024</div><div class="t" style="left:235.5px;top:3.4px;font-size:13.4px;line-height:13.6px;color:#00e4ff">maanantai</div><svg class="r" style="left:0;top:0" width="40" height="34" viewBox="0 0 40 34"><circle cx="16.6" cy="17.5" r="7.6" fill="none" stroke="#50575e" stroke-width="1.5"/><path d="M13.600000000000001 14.5L19.400000000000002 20.3M14.400000000000002 20.7H19.8V15.3" fill="none" stroke="#50575e" stroke-width="1.6"/></svg><div class="r" style="left:0;top:34.5px;width:336px;height:20px;background:#ddfae2"></div><div class="t" style="left:132px;top:36.6px;font-size:13.6px;line-height:13.6px;color:#363d4a">09:00</div><div class="r" style="left:0;top:54.5px;width:336px;height:20px;background:#d9f0fd"></div><div class="t" style="left:132px;top:56.6px;font-size:13.6px;line-height:13.6px;color:#363d4a">09:10</div><div class="r" style="left:0;top:74.5px;width:336px;height:20px;background:#ddfae2"></div><div class="t" style="left:132px;top:76.6px;font-size:13.6px;line-height:13.6px;color:#363d4a">09:20</div><div class="r" style="left:0;top:94.5px;width:336px;height:20px;background:#d9f0fd"></div><div class="r" style="left:131.5px;top:94.5px;width:204.5px;height:20px;background:#fffcc0"></div><div class="t" style="left:172.9px;top:96.6px;font-size:13.6px;line-height:13.6px;color:#1a1a1a">0000171</div><div class="t" style="left:235.6px;top:96.6px;font-size:13.2px;line-height:13.6px;color:#1a1a1a">Asiakas 5</div><div class="t" style="left:132px;top:96.6px;font-size:13.6px;line-height:13.6px;color:#1a1a1a">09:30</div><div class="r" style="left:0;top:114.5px;width:336px;height:20px;background:#ddfae2"></div><div class="t" style="left:132px;top:116.6px;font-size:13.6px;line-height:13.6px;color:#363d4a">09:40</div><div class="r" style="left:0;top:134.5px;width:336px;height:20px;background:#d9f0fd"></div><div class="t" style="left:132px;top:136.6px;font-size:13.6px;line-height:13.6px;color:#363d4a">09:50</div><div class="r" style="left:0;top:154.5px;width:336px;height:20px;background:#ddfae2"></div><div class="t" style="left:132px;top:156.6px;font-size:13.6px;line-height:13.6px;color:#363d4a">10:00</div><div class="r" style="left:0;top:174.5px;width:336px;height:20px;background:#d9f0fd"></div><div class="t" style="left:132px;top:176.6px;font-size:13.6px;line-height:13.6px;color:#363d4a">10:10</div><div class="r" style="left:0;top:194.5px;width:336px;height:20px;background:#ddfae2"></div><div class="t" style="left:132px;top:196.6px;font-size:13.6px;line-height:13.6px;color:#363d4a">10:20</div><div class="r" style="left:0;top:214.5px;width:336px;height:20px;background:#d9f0fd"></div><div class="t" style="left:132px;top:216.6px;font-size:13.6px;line-height:13.6px;color:#363d4a">10:30</div><div class="r" style="left:0;top:234.5px;width:336px;height:20px;background:#ddfae2"></div><div class="t" style="left:132px;top:236.6px;font-size:13.6px;line-height:13.6px;color:#363d4a">10:40</div><div class="r" style="left:0;top:254.5px;width:336px;height:20px;background:#d9f0fd"></div><div class="t" style="left:132px;top:256.6px;font-size:13.6px;line-height:13.6px;color:#363d4a">10:50</div><div class="r" style="left:0;top:274.5px;width:336px;height:20px;background:#ddfae2"></div><div class="t" style="left:132px;top:276.6px;font-size:13.6px;line-height:13.6px;color:#363d4a">11:00</div><div class="r" style="left:0;top:294.5px;width:336px;height:20px;background:#d9f0fd"></div><div class="t" style="left:132px;top:296.6px;font-size:13.6px;line-height:13.6px;color:#363d4a">11:10</div><div class="r" style="left:0;top:314.5px;width:336px;height:20px;background:#ddfae2"></div><div class="t" style="left:132px;top:316.6px;font-size:13.6px;line-height:13.6px;color:#363d4a">11:20</div><div class="r" style="left:0;top:334.5px;width:336px;height:20px;background:#d9f0fd"></div><div class="t" style="left:132px;top:336.6px;font-size:13.6px;line-height:13.6px;color:#363d4a">11:30</div><div class="r" style="left:0;top:354.5px;width:336px;height:20px;background:#ddfae2"></div><div class="r" style="left:131.5px;top:354.5px;width:204.5px;height:20px;background:#fffcc0"></div><div class="t" style="left:172.9px;top:356.6px;font-size:13.6px;line-height:13.6px;color:#1a1a1a">0000388</div><div class="t" style="left:235.6px;top:356.6px;font-size:13.2px;line-height:13.6px;color:#1a1a1a">Asiakas 6</div><div class="t" style="left:132px;top:356.6px;font-size:13.6px;line-height:13.6px;color:#1a1a1a">11:40</div><div class="r" style="left:0;top:374.5px;width:336px;height:20px;background:#d9f0fd"></div><div class="t" style="left:132px;top:376.6px;font-size:13.6px;line-height:13.6px;color:#363d4a">11:50</div><div class="r" style="left:0;top:394.5px;width:336px;height:20px;background:#ddfae2"></div><div class="t" style="left:132px;top:396.6px;font-size:13.6px;line-height:13.6px;color:#363d4a">12:00</div><div class="r" style="left:0;top:414.5px;width:336px;height:20px;background:#d9f0fd"></div><div class="t" style="left:132px;top:416.6px;font-size:13.6px;line-height:13.6px;color:#363d4a">12:10</div><div class="r" style="left:0;top:434.5px;width:336px;height:20px;background:#ddfae2"></div><div class="t" style="left:132px;top:436.6px;font-size:13.6px;line-height:13.6px;color:#363d4a">12:20</div><div class="r" style="left:0;top:454.5px;width:336px;height:20px;background:#d9f0fd"></div><div class="t" style="left:132px;top:456.6px;font-size:13.6px;line-height:13.6px;color:#363d4a">12:30</div><div class="r" style="left:0;top:474.5px;width:336px;height:20px;background:#ddfae2"></div><div class="t" style="left:132px;top:476.6px;font-size:13.6px;line-height:13.6px;color:#363d4a">12:40</div><div class="r" style="left:0;top:494.5px;width:336px;height:20px;background:#d9f0fd"></div><div class="t" style="left:132px;top:496.6px;font-size:13.6px;line-height:13.6px;color:#363d4a">12:50</div><div class="r" style="left:0;top:514.5px;width:336px;height:20px;background:#ddfae2"></div><div class="t" style="left:132px;top:516.6px;font-size:13.6px;line-height:13.6px;color:#363d4a">13:00</div><div class="r" style="left:0;top:534.5px;width:336px;height:20px;background:#d9f0fd"></div><div class="t" style="left:132px;top:536.6px;font-size:13.6px;line-height:13.6px;color:#363d4a">13:10</div><div class="r" style="left:0;top:554.5px;width:336px;height:20px;background:#ddfae2"></div><div class="t" style="left:132px;top:556.6px;font-size:13.6px;line-height:13.6px;color:#363d4a">13:20</div><div class="r" style="left:0;top:574.5px;width:336px;height:20px;background:#d9f0fd"></div><div class="t" style="left:132px;top:576.6px;font-size:13.6px;line-height:13.6px;color:#363d4a">13:30</div><div class="r" style="left:0;top:594.5px;width:336px;height:20px;background:#ddfae2"></div><div class="t" style="left:132px;top:596.6px;font-size:13.6px;line-height:13.6px;color:#363d4a">13:40</div><div class="r" style="left:0;top:614.5px;width:336px;height:20px;background:#d9f0fd"></div><div class="t" style="left:132px;top:616.6px;font-size:13.6px;line-height:13.6px;color:#363d4a">13:50</div></div></div><svg class="r" style="left:0;top:0" width="1510" height="870" viewBox="0 0 1510 870"><path d="M1203.0 338.0Q1212.2 327.2 1221.4 338.0Q1212.2 345.7 1203.0 338.0Z" fill="#f4f6fb" stroke="#7078b8" stroke-width="1.1"/><path d="M1203.4 337.4Q1212.2 327.59999999999997 1221.0 337.4" fill="none" stroke="#c88850" stroke-width="1.6"/><circle cx="1212.2" cy="337.2" r="4.4" fill="#6c7890"/><circle cx="1212.2" cy="337.2" r="2.2" fill="#2a3040"/><circle cx="1211.0" cy="335.7" r="0.9" fill="#dde"/><path d="M1228.8 336.7L1231.8 340.5L1236.4 333.3" fill="none" stroke="#111" stroke-width="2.6" stroke-linejoin="miter"/><path d="M1228.8 596.7L1231.8 600.5L1236.4 593.3" fill="none" stroke="#111" stroke-width="2.6" stroke-linejoin="miter"/></svg><div class="r" style="left:1115px;top:165px;width:338px;height:690px;border:1px solid #c6cad0"></div><div class="r" style="left:1115px;top:165px;width:338px;height:68px;border:2px solid #bcbcbc;border-bottom:none;background:#f5f5f5"></div><div class="r" style="left:1117px;top:199px;width:334px;height:1px;background:#cacaca"></div><div class="r" style="left:1117px;top:232px;width:334px;height:1px;background:#e0e0e0"></div><div class="r" style="left:1247px;top:200px;width:1px;height:32px;background:#cacaca"></div><div class="r" style="left:1289px;top:200px;width:1px;height:32px;background:#cacaca"></div><div class="r" style="left:1351px;top:200px;width:1px;height:32px;background:#cacaca"></div><div class="t" style="left:1197.7px;top:177.40px;font-size:13.7px;line-height:13.7px;color:#333;font-weight:400;">2. Työntekijä 3 (Laboratorio)</div><div class="t" style="left:1133.5px;top:211.83px;font-size:13.2px;line-height:13.2px;color:#333;font-weight:400;">Päivämäärä</div><svg class="r" style="left:1226px;top:214px" width="11" height="8" viewBox="0 0 11 8"><path d="M0.6 6.8H10.4L5.5 1.2Z" fill="#555"/></svg><div class="t" style="left:1255.3px;top:211.83px;font-size:13.2px;line-height:13.2px;color:#333;font-weight:400;">Aika</div><div class="t" style="left:1316.6px;top:211.83px;font-size:13.2px;line-height:13.2px;color:#333;font-weight:400;">#</div><div class="t" style="left:1379px;top:211.83px;font-size:13.2px;line-height:13.2px;color:#333;font-weight:400;">Asiakas</div><div class="r" style="left:1453px;top:166px;width:21px;height:689px;background:#fff;border-right:1px solid #dcdcdc"></div><div class="r" style="left:1458px;top:187px;width:10px;height:181px;background:#bdbdbd"></div><svg class="r" style="left:1459px;top:175px" width="8" height="5" viewBox="0 0 8 5"><path d="M0.5 4.5H7.5L4 0.5Z" fill="#888"/></svg><svg class="r" style="left:1459px;top:841px" width="8" height="5" viewBox="0 0 8 5"><path d="M0.5 0.5H7.5L4 4.5Z" fill="#888"/></svg><div class="r" style="left:1483px;top:165px;width:6px;height:690px;overflow:hidden"><div class="r" style="left:0;top:0;width:6px;height:690px;border-left:1px solid #c6cad0;border-bottom:1px solid #c6cad0"></div><div class="r" style="left:0;top:0;width:6px;height:68px;border-left:2px solid #bcbcbc;border-top:2px solid #bcbcbc;background:#f5f5f5"></div><div class="r" style="left:2px;top:34px;width:4px;height:1px;background:#cacaca"></div><div class="r" style="left:2px;top:67px;width:4px;height:1px;background:#c4c4c4"></div><div class="r" style="left:1px;top:68px;width:5px;height:34.5px;background:#d9f0fd"></div><div class="r" style="left:1px;top:102.5px;width:5px;height:20px;background:#ddfae2"></div><div class="r" style="left:1px;top:122.5px;width:5px;height:20px;background:#d9f0fd"></div><div class="r" style="left:1px;top:142.5px;width:5px;height:20px;background:#ddfae2"></div><div class="r" style="left:1px;top:162.5px;width:5px;height:20px;background:#d9f0fd"></div><div class="r" style="left:1px;top:182.5px;width:5px;height:20px;background:#ddfae2"></div><div class="r" style="left:1px;top:202.5px;width:5px;height:20px;background:#d9f0fd"></div><div class="r" style="left:1px;top:222.5px;width:5px;height:20px;background:#ddfae2"></div><div class="r" style="left:1px;top:242.5px;width:5px;height:20px;background:#d9f0fd"></div><div class="r" style="left:1px;top:262.5px;width:5px;height:20px;background:#ddfae2"></div><div class="r" style="left:1px;top:282.5px;width:5px;height:20px;background:#d9f0fd"></div><div class="r" style="left:1px;top:302.5px;width:5px;height:20px;background:#ddfae2"></div><div class="r" style="left:1px;top:322.5px;width:5px;height:20px;background:#d9f0fd"></div><div class="r" style="left:1px;top:342.5px;width:5px;height:20px;background:#ddfae2"></div><div class="r" style="left:1px;top:362.5px;width:5px;height:20px;background:#d9f0fd"></div><div class="r" style="left:1px;top:382.5px;width:5px;height:20px;background:#ddfae2"></div><div class="r" style="left:1px;top:402.5px;width:5px;height:20px;background:#d9f0fd"></div><div class="r" style="left:1px;top:422.5px;width:5px;height:20px;background:#ddfae2"></div><div class="r" style="left:1px;top:442.5px;width:5px;height:20px;background:#d9f0fd"></div><div class="r" style="left:1px;top:462.5px;width:5px;height:20px;background:#ddfae2"></div><div class="r" style="left:1px;top:482.5px;width:5px;height:20px;background:#d9f0fd"></div><div class="r" style="left:1px;top:502.5px;width:5px;height:20px;background:#ddfae2"></div><div class="r" style="left:1px;top:522.5px;width:5px;height:20px;background:#d9f0fd"></div><div class="r" style="left:1px;top:542.5px;width:5px;height:20px;background:#ddfae2"></div><div class="r" style="left:1px;top:562.5px;width:5px;height:20px;background:#d9f0fd"></div><div class="r" style="left:1px;top:582.5px;width:5px;height:20px;background:#ddfae2"></div><div class="r" style="left:1px;top:602.5px;width:5px;height:20px;background:#d9f0fd"></div><div class="r" style="left:1px;top:622.5px;width:5px;height:20px;background:#ddfae2"></div><div class="r" style="left:1px;top:642.5px;width:5px;height:20px;background:#d9f0fd"></div><div class="r" style="left:1px;top:662.5px;width:5px;height:20px;background:#ddfae2"></div><div class="r" style="left:1px;top:682.5px;width:5px;height:20px;background:#d9f0fd"></div></div><div class="r" style="left:740px;top:864px;width:749px;height:21px;background:#f0f0f0"></div><div class="r" style="left:761px;top:865px;width:480px;height:19px;background:#cdcdcd"></div><svg class="r" style="left:745px;top:869px" width="10" height="11" viewBox="0 0 10 11"><path d="M8 1L3 5.5L8 10" fill="none" stroke="#555" stroke-width="2.2"/></svg><svg class="r" style="left:1473px;top:869px" width="10" height="11" viewBox="0 0 10 11"><path d="M2 1L7 5.5L2 10" fill="none" stroke="#555" stroke-width="2.2"/></svg><div class="r" style="left:22px;top:886px;width:1467px;height:1px;background:#c8c8c8"></div><div class="r" style="left:207px;top:889px;width:1282px;height:1.5px;background:#cfcfcf"></div><div class="r" style="left:1488px;top:886px;width:1px;height:4px;background:#cfcfcf"></div><div class="r" style="left:22px;top:886px;width:186px;height:55px;border:1px solid #c8c8c8;border-bottom:none;background:#fff"></div><div class="r" style="left:22px;top:939px;width:186px;height:3px;background:#1a9ff0"></div><svg class="r" style="left:40px;top:901px" width="31" height="28" viewBox="0 0 31 28"><defs><linearGradient id="gTab" x1="0" y1="0" x2="0" y2="1"><stop offset="0" stop-color="#f4f6fc"/><stop offset="1" stop-color="#dde3f0"/></linearGradient></defs><rect x="0.8" y="0.8" width="29.4" height="26.4" rx="2" fill="url(#gTab)" stroke="#6d85b8" stroke-width="1.2"/><rect x="1.4" y="1.4" width="28.2" height="5" fill="#90b0e0"/><rect x="24" y="2.4" width="3" height="2.5" fill="#e05040"/></svg><div class="t" style="left:82px;top:907.94px;font-size:13.3px;line-height:13.3px;color:#1e8fe0;font-weight:400;">Rekisteröinti</div><svg class="r" style="left:175px;top:908px" width="11" height="11" viewBox="0 0 11 11"><path d="M1 1L10 10M10 1L1 10" stroke="#1e8fe0" stroke-width="2"/></svg><svg class="r" style="left:29px;top:944px" width="20" height="20" viewBox="0 0 20 20"><circle cx="10" cy="10" r="9.8" fill="#4a7ec0"/><circle cx="10" cy="5.6" r="1.7" fill="#fff"/><rect x="8.6" y="8.3" width="2.9" height="7.6" fill="#fff"/></svg><div class="t" style="left:70.8px;top:948.79px;font-size:13.6px;line-height:13.6px;color:#333;font-weight:400;">7.2.9065.10 Standard</div><div class="r" style="left:229px;top:945px;width:1px;height:20px;background:#c4c4c4"></div><div class="r" style="left:399px;top:945px;width:1px;height:20px;background:#c4c4c4"></div><div class="r" style="left:578px;top:945px;width:1px;height:20px;background:#c4c4c4"></div><div class="r" style="left:727px;top:945px;width:1px;height:20px;background:#c4c4c4"></div><div class="r" style="left:875px;top:945px;width:1px;height:20px;background:#c4c4c4"></div><div class="r" style="left:1458px;top:945px;width:1px;height:20px;background:#c4c4c4"></div><svg class="r" style="left:243px;top:944px" width="17" height="19" viewBox="0 0 17 19"><defs><linearGradient id="gDb" x1="0" y1="0" x2="1" y2="0"><stop offset="0" stop-color="#e08a30"/><stop offset="0.5" stop-color="#fde0a0"/><stop offset="1" stop-color="#d07a20"/></linearGradient></defs><rect x="0.5" y="1.5" width="16" height="16" rx="3" fill="url(#gDb)" stroke="#c07020" stroke-width="0.8"/><path d="M1 6.5Q8.5 9 16 6.5M1 11.5Q8.5 14 16 11.5" fill="none" stroke="#c07020" stroke-width="0.8"/><ellipse cx="8.5" cy="2.8" rx="7.5" ry="2" fill="#fbe0a8" stroke="#c07020" stroke-width="0.6"/></svg><div class="t" style="left:281.6px;top:948.70px;font-size:13.7px;line-height:13.7px;color:#333;font-weight:400;">localhost (utf8)</div><svg class="r" style="left:412px;top:944px" width="19" height="19" viewBox="0 0 18 18"><g transform="translate(0,0)"><path d="M1 17.5Q1 11.5 9 11.5Q17 11.5 17 17.5Z" fill="url(#gBody)" stroke="#5c9a36" stroke-width="0.7"/><path d="M4.2 9Q3 1 9 0.7Q15 1 13.8 9Q12 13 9 13Q6 13 4.2 9Z" fill="url(#gHair)"/><ellipse cx="9" cy="8.2" rx="3.6" ry="4.6" fill="url(#gSkin)"/><path d="M5 5Q9 1.5 13 5Q9 3.6 5 5Z" fill="#a86a3c"/></g></svg><div class="t" style="left:451.5px;top:949.38px;font-size:12.9px;line-height:12.9px;color:#333;font-weight:400;">NIKOLAY (MAIN)</div><svg class="r" style="left:591px;top:945px" width="18" height="18" viewBox="0 0 18 18"><rect x="0.5" y="0.5" width="17" height="17" fill="#f4f6fb" stroke="#7a90c0"/><rect x="0.5" y="0.5" width="17" height="4" fill="#e86050"/><text x="9" y="15.3" font-family="Liberation Sans" font-weight="700" font-size="10.5" text-anchor="middle" fill="#2a4a8a">31</text></svg><div class="t" style="left:632px;top:948.70px;font-size:13.7px;line-height:13.7px;color:#333;font-weight:400;">16.09.2024</div><div class="t" style="left:762px;top:948.70px;font-size:13.7px;line-height:13.7px;color:#333;font-weight:400;">00:00:00:000</div><svg class="r" style="left:0;top:940px" width="1510" height="30" viewBox="0 940 1510 30"><path d="M1482.6 952.0L1484.4 950.2L1486.2 952.0L1484.4 953.8Z" fill="#6e6e6e"/><path d="M1477.5 957.0L1479.3 955.2L1481.1 957.0L1479.3 958.8Z" fill="#6e6e6e"/><path d="M1482.6 957.0L1484.4 955.2L1486.2 957.0L1484.4 958.8Z" fill="#6e6e6e"/><path d="M1472.4 962.3L1474.2 960.5L1476.0 962.3L1474.2 964.1Z" fill="#6e6e6e"/><path d="M1477.5 962.3L1479.3 960.5L1481.1 962.3L1479.3 964.1Z" fill="#6e6e6e"/><path d="M1482.6 962.3L1484.4 960.5L1486.2 962.3L1484.4 964.1Z" fill="#6e6e6e"/></svg></body></html>
